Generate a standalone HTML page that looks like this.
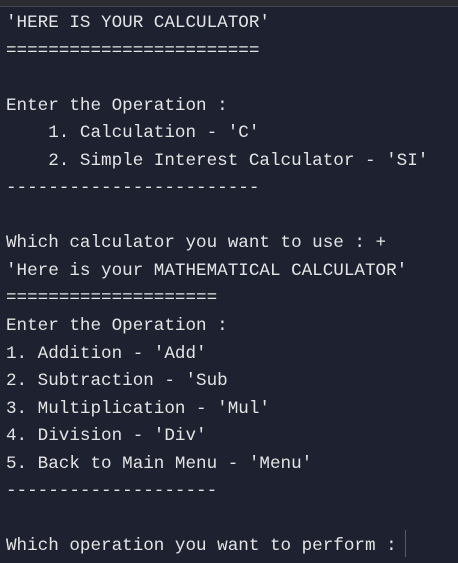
<!DOCTYPE html>
<html><head><style>
html,body{margin:0;padding:0;}
body{width:458px;height:563px;background:#1d2130;overflow:hidden;position:relative;}
.bar{position:absolute;left:0;top:0;width:458px;height:6px;background:#2a2c31;border-bottom:1px solid #44474d;}
pre{position:absolute;left:6px;top:10px;margin:0;font-family:"Liberation Mono",monospace;font-size:17.6px;line-height:27.55px;color:#e4e4e4;white-space:pre;}
.cur{position:absolute;left:405px;top:530px;width:1px;height:27px;background:#555a64;}
</style></head><body>
<div class="bar"></div>
<pre>'HERE IS YOUR CALCULATOR'
========================

Enter the Operation :
    1. Calculation - 'C'
    2. Simple Interest Calculator - 'SI'
------------------------

Which calculator you want to use : +
'Here is your MATHEMATICAL CALCULATOR'
====================
Enter the Operation :
1. Addition - 'Add'
2. Subtraction - 'Sub
3. Multiplication - 'Mul'
4. Division - 'Div'
5. Back to Main Menu - 'Menu'
--------------------

Which operation you want to perform : </pre>
<div class="cur"></div>
</body></html>
